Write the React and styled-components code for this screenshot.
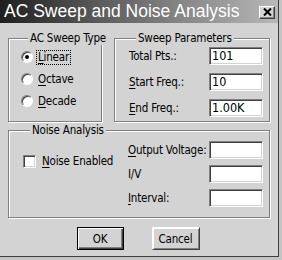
import React from "react";
import styled, { createGlobalStyle } from "styled-components";

const GlobalStyle = createGlobalStyle`
  html, body {
    margin: 0;
    padding: 0;
    background: #c4c4c4;
  }
`;

const face = "#d3d3d3";

const Window = styled.div`
  width: 278px;
  height: 256px;
  background: ${face};
  border-right: 1px solid #404040;
  border-bottom: 1px solid #404040;
  display: flex;
  flex-direction: column;
  font-family: "DejaVu Sans Condensed", "DejaVu Sans", sans-serif;
  font-stretch: condensed;
  font-size: 11.5px;
  letter-spacing: -0.2px;
  color: #000;
`;

const TitleBar = styled.div`
  height: 23px;
  flex: none;
  display: flex;
  align-items: center;
  justify-content: space-between;
  padding: 0 3px 0 4px;
  background: linear-gradient(to right, #1e1e1e 0%, #5a5a5a 35%, #b8b8b8 100%);
`;

const Title = styled.span`
  font-family: "Liberation Sans", Arial, sans-serif;
  font-stretch: normal;
  font-size: 17.5px;
  letter-spacing: 0;
  color: #fff;
  line-height: 23px;
  white-space: nowrap;
`;

const CloseButton = styled.div`
  width: 14px;
  height: 11px;
  display: flex;
  align-items: center;
  justify-content: center;
  background: ${face};
  border: 1px solid;
  border-color: #fff #404040 #404040 #fff;
  box-shadow: inset -1px -1px #808080;
  margin-top: 1px;
`;

const Body = styled.div`
  flex: 1;
  display: flex;
  flex-direction: column;
  padding: 8px 8px 0 8px;
`;

const TopRow = styled.div`
  display: flex;
  gap: 12px;
`;

const Group = styled.fieldset`
  margin: ${(p) => p.$mt || 0}px 0 0 0;
  padding: ${(p) => p.$pad || "0"};
  width: ${(p) => p.$w}px;
  height: ${(p) => p.$h}px;
  box-sizing: border-box;
  border: 1px solid #808080;
  box-shadow: inset 1px 1px #fff, 1px 1px #fff;
  min-width: 0;
`;

const Legend = styled.legend`
  margin-left: 7px;
  padding: 0 2px;
  background: ${face};
  line-height: 14px;
  white-space: nowrap;
`;

const RadioList = styled.div`
  display: flex;
  flex-direction: column;
`;

const RadioRow = styled.label`
  display: flex;
  align-items: center;
  height: 22px;
  gap: 4px;
`;

const RadioDot = styled.span`
  width: 10px;
  height: 10px;
  flex: none;
  border-radius: 50%;
  border: 1px solid;
  border-color: #808080 #fff #fff #808080;
  background: #fff;
  box-shadow: inset 1px 1px #404040;
  display: flex;
  align-items: center;
  justify-content: center;
  &::after {
    content: "";
    width: 4px;
    height: 4px;
    border-radius: 50%;
    background: ${(p) => (p.$on ? "#000" : "transparent")};
  }
`;

const Caption = styled.span`
  line-height: 13px;
  padding: 0 1px;
  outline: ${(p) => (p.$focus ? "1px dotted #000" : "none")};
  white-space: nowrap;
`;

const Key = styled.u`
  text-decoration-thickness: 1px;
  text-underline-offset: 2px;
`;

const FieldGrid = styled.div`
  display: grid;
  grid-template-columns: ${(p) => p.$cols};
  row-gap: ${(p) => p.$gap}px;
  align-items: center;
`;

const FieldLabel = styled.span`
  white-space: nowrap;
`;

const TextBox = styled.div`
  width: 49px;
  height: 14px;
  background: #fff;
  border: 1px solid;
  border-color: #808080 #fff #fff #808080;
  box-shadow: inset 1px 1px #404040, inset -1px -1px ${face};
  padding: 1px 1px 1px 2px;
  font-size: 12.5px;
  letter-spacing: 0;
  line-height: 14px;
`;

const NoiseBody = styled.div`
  display: flex;
`;

const CheckArea = styled.label`
  width: 105px;
  display: flex;
  align-items: center;
  gap: 5px;
  margin-top: 14px;
  align-self: flex-start;
`;

const CheckBox = styled.span`
  width: 11px;
  height: 11px;
  flex: none;
  background: #fff;
  border: 1px solid;
  border-color: #808080 #fff #fff #808080;
  box-shadow: inset 1px 1px #404040, inset -1px -1px ${face};
`;

const ButtonRow = styled.div`
  display: flex;
  justify-content: center;
  gap: 28px;
  margin-top: 9px;
  padding-right: 2px;
`;

const Button = styled.div`
  width: ${(p) => p.$w}px;
  height: 23px;
  box-sizing: border-box;
  display: flex;
  align-items: center;
  justify-content: center;
  background: ${face};
  border: 1px solid ${(p) => (p.$default ? "#000" : "transparent")};
  box-shadow: ${(p) =>
    p.$default
      ? "inset 1px 1px #fff, inset -1px -1px #404040, inset -2px -2px #808080"
      : "inset 1px 1px #fff, inset -1px -1px #808080"};
  ${(p) => (!p.$default ? "border-color: #fff #404040 #404040 #fff;" : "")}
`;

export default function App() {
  return (
    <>
      <GlobalStyle />
      <Window>
        <TitleBar>
          <Title>AC Sweep and Noise Analysis</Title>
          <CloseButton>
            <svg width="9" height="8" viewBox="0 0 9 8">
              <path d="M1 0.5 L8 7.5 M8 0.5 L1 7.5" stroke="#000" strokeWidth="2" />
            </svg>
          </CloseButton>
        </TitleBar>
        <Body>
          <TopRow>
            <Group $w={94} $h={91} $pad="1px 0 0 12px">
              <Legend>AC Sweep Type</Legend>
              <RadioList>
                <RadioRow>
                  <RadioDot $on />
                  <Caption $focus>
                    <Key>L</Key>inear
                  </Caption>
                </RadioRow>
                <RadioRow>
                  <RadioDot />
                  <Caption>
                    <Key>O</Key>ctave
                  </Caption>
                </RadioRow>
                <RadioRow>
                  <RadioDot />
                  <Caption>
                    <Key>D</Key>ecade
                  </Caption>
                </RadioRow>
              </RadioList>
            </Group>
            <Group $w={156} $h={91} $pad="2px 0 0 14px">
              <Legend>Sweep Parameters</Legend>
              <FieldGrid $cols="80px 53px" $gap={8}>
                <FieldLabel>Total Pts.:</FieldLabel>
                <TextBox>101</TextBox>
                <FieldLabel>
                  <Key>S</Key>tart Freq.:
                </FieldLabel>
                <TextBox>10</TextBox>
                <FieldLabel>
                  <Key>E</Key>nd Freq.:
                </FieldLabel>
                <TextBox>1.00K</TextBox>
              </FieldGrid>
            </Group>
          </TopRow>
          <Group $w={262} $h={95} $mt={1} $pad="4px 0 0 14px">
            <Legend>Noise Analysis</Legend>
            <NoiseBody>
              <CheckArea>
                <CheckBox />
                <Caption>
                  <Key>N</Key>oise Enabled
                </Caption>
              </CheckArea>
              <FieldGrid $cols="81px 53px" $gap={6}>
                <FieldLabel>
                  <Key>O</Key>utput Voltage:
                </FieldLabel>
                <TextBox />
                <FieldLabel>I/V</FieldLabel>
                <TextBox />
                <FieldLabel>
                  <Key>I</Key>nterval:
                </FieldLabel>
                <TextBox />
              </FieldGrid>
            </NoiseBody>
          </Group>
          <ButtonRow>
            <Button $w={47} $default>
              OK
            </Button>
            <Button $w={48}>Cancel</Button>
          </ButtonRow>
        </Body>
      </Window>
    </>
  );
}
